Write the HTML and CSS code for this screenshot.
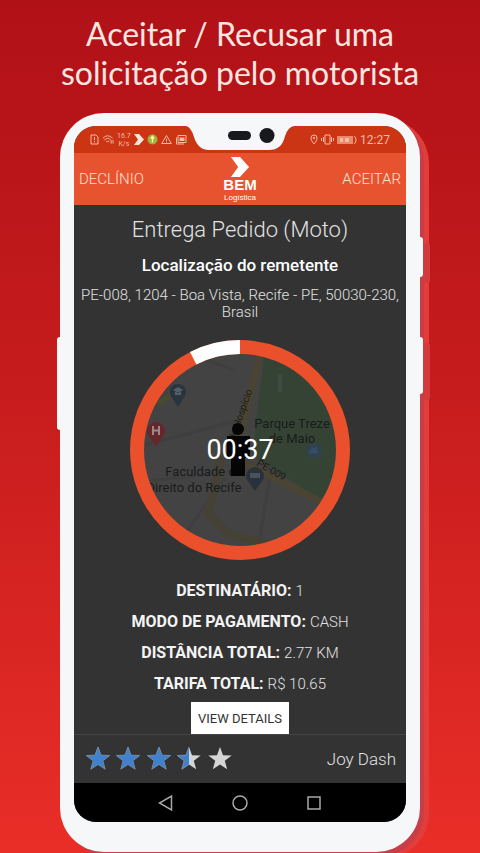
FILE: index.html
```html
<!DOCTYPE html>
<html lang="pt-BR">
<head>
<meta charset="utf-8">
<meta name="viewport" content="width=device-width, initial-scale=1">
<title>BEM Logística</title>
<link rel="stylesheet" href="styles.css">
</head>
<body>
<h1 class="headline">Aceitar / Recusar uma<br>solicitação pelo motorista</h1>
<main class="phone">
  <span class="key key-left"></span>
  <span class="key key-power"></span>
  <span class="key key-volume"></span>
  <div class="screen">
    <div class="status">
      <div class="status-group">
        <svg width="9" height="11" viewBox="0 0 9 11" fill="none" stroke="#f6b9a4"><path d="M1 1h5l2 2v7H1z"/><path d="M4.500 3v3M4.500 7v1.200"/></svg>
        <svg width="12" height="11" viewBox="0 0 13 11" fill="none" stroke="#f6b9a4"><path d="M1 4q5-5 10.500 0M2.500 6q4-3.500 7 0M4.500 8q2-1.500 3.500 0"/><path d="M10 6v4M12 6v4"/></svg>
        <span class="speed">16.7<br>K/s</span>
        <svg width="10" height="11" viewBox="0 0 10 11"><path d="M0 0h5l5 5.500L5 11H0l4-5.500z" fill="#ffe4da"/></svg>
        <svg width="11" height="11" viewBox="0 0 11 11"><circle cx="5.500" cy="5.500" r="5" fill="#9db441"/><path d="M5.500 2.500v6M3.800 4.500l1.700-2 1.700 2" stroke="#fff0a0" fill="none" stroke-width="1.500"/></svg>
        <svg width="11" height="11" viewBox="0 0 11 11" fill="none" stroke="#f6b9a4"><path d="M5.500 1.500l4.800 8H.7zM5.500 4.500v2.300M5.500 7.500v1"/></svg>
        <svg width="12" height="11" viewBox="0 0 12 11" fill="none" stroke="#f6b9a4"><path d="M3 1.500h8v7H3zM1.500 3.500v6.500H9M4.500 4h5M4.500 6h5"/><path d="M5 4.500h4v2H5z" fill="#f6b9a4"/></svg>
      </div>
      <div class="status-group">
        <svg width="8" height="11" viewBox="0 0 8 11" fill="none" stroke="#f6b9a4"><path d="M4 10C2 7.500 1 6 1 4a3 3 0 0 1 6 0c0 2-1 3.500-3 6z"/><circle cx="4" cy="4" r=".8"/></svg>
        <svg width="13" height="11" viewBox="0 0 13 11" fill="none" stroke="#f6b9a4"><path d="M4 1h5v9H4zM2.500 3v5M10.500 3v5M.5 4v3M12.500 4v3"/></svg>
        <svg width="20" height="10" viewBox="0 0 20 10"><path d="M0 1h16v8H0z" fill="#e98a6d"/><path d="M3 3h3v4H3zM8 3h4v4H8z" fill="#f6b9a4"/><path d="M17 1.500q2 0 2 3.500t-2 3.500" fill="none" stroke="#f6b9a4"/></svg>
        <span class="time">12:27</span>
      </div>
    </div>
    <header class="appbar">
      <button class="action" type="button">DECLÍNIO</button>
      <div class="logo">
        <svg width="20" height="20" viewBox="0 0 20 22"><path d="M0 0h10l10 11-10 11H0l8-11z" fill="#fff"/></svg>
        <strong class="logo-name">BEM</strong>
        <span class="logo-sub">Logística</span>
      </div>
      <button class="action action-end" type="button">ACEITAR</button>
    </header>
    <section class="request">
      <h2 class="service">Entrega Pedido (Moto)</h2>
      <h3 class="label">Localização do remetente</h3>
      <p class="address">PE-008, 1204 - Boa Vista, Recife - PE, 50030-230, Brasil</p>
      <div class="timer">
        <svg class="map" viewBox="0 0 220 220">
          <defs><clipPath id="disc"><circle cx="110" cy="110" r="98"/></clipPath></defs>
          <g clip-path="url(#disc)">
            <path d="M0 0h220v220H0z" fill="#434344"/>
            <path d="M20 0L105 30M15 105l90-24M95 138L40 215M140 135l-12 75M10 142l80-9" fill="none" stroke="#3f3f40" stroke-width="3"/>
            <path d="M136 0h84v134l-22 30-76-48z" fill="#344334"/>
            <path d="M150 34v18" fill="none" stroke="#3d4c3e" stroke-width="4"/>
            <path d="M192 164l24-34" fill="none" stroke="#454c52" stroke-width="7"/>
            <path d="M131 10L111 92 104 118 195 164 218 180" fill="none" stroke="#4a4532" stroke-width="7"/>
            <path d="M92 110q-4 30-14 64l20 20 50 12" fill="none" stroke="#454135" stroke-width="8"/>
            <path d="M28 64l12-8" stroke="#494b2d" stroke-width="5"/>
            <g fill="#29343d"><circle cx="48" cy="52" r="8"/><path d="M41 56h14l-7 11z"/></g>
            <path d="M43 50l5-3 5 3-5 3zM45 52v3h6v-3" fill="#52606a"/>
            <g fill="#66272c"><circle cx="26" cy="91" r="9"/><path d="M19 96h14l-7 11z"/></g>
            <path d="M23 86v9M29 86v9M23 90.500h6" stroke="#99898b" stroke-width="2"/>
            <g fill="#29313a"><circle cx="125" cy="136" r="9"/><path d="M118 141h14l-7 10z"/></g>
            <path d="M120 133h10v5h-10z" fill="#4a535d"/>
            <circle cx="184" cy="111" r="8" fill="#30434c"/><path d="M179 112h9M181 109h6" stroke="#354d67" stroke-width="3"/>
            <text class="map-text" x="162" y="88" text-anchor="middle">Parque Treze</text>
            <text class="map-text" x="162" y="103" text-anchor="middle">de Maio</text>
            <text class="map-text" x="74" y="136" text-anchor="middle">Faculdade de</text>
            <text class="map-text" x="64" y="152" text-anchor="middle">Direito do Recife</text>
            <text class="map-road" transform="translate(105 101) rotate(-71)">do Hospício</text>
            <text class="map-road" transform="translate(126 125) rotate(30)">PE-009</text>
            <circle cx="108" cy="89" r="6" fill="#050505"/>
            <path d="M97 96h23v22h-5v18h-14v-18h-4z" fill="#050505"/>
          </g>
          <circle cx="110" cy="110" r="103" fill="none" stroke="#ea502b" stroke-width="14"/>
          <path d="M63.200 18.200A103 103 0 0 1 110 7" fill="none" stroke="#fff" stroke-width="14"/>
        </svg>
        <time class="countdown">00:37</time>
      </div>
      <dl class="facts">
        <div class="fact"><dt>DESTINATÁRIO:</dt><dd>1</dd></div>
        <div class="fact"><dt>MODO DE PAGAMENTO:</dt><dd>CASH</dd></div>
        <div class="fact"><dt>DISTÂNCIA TOTAL:</dt><dd>2.77 KM</dd></div>
        <div class="fact"><dt>TARIFA TOTAL:</dt><dd>R$ 10.65</dd></div>
      </dl>
      <button class="details" type="button">VIEW DETAILS</button>
    </section>
    <footer class="customer">
      <svg class="stars" width="150" height="26" viewBox="0 0 150 26" role="img" aria-label="3,5">
        <defs>
          <path id="star" d="M13 1l3 8.200 8.700.3-6.900 5.300 2.400 8.400L13 18.400l-7.200 4.800 2.400-8.400L1.300 9.500l8.700-.3z"/>
          <clipPath id="half"><path d="M0 0h13v26H0z"/></clipPath>
        </defs>
        <g fill="#3f80cf" stroke="#718ba9"><use href="#star" x="1"/><use href="#star" x="31"/><use href="#star" x="62"/></g>
        <use href="#star" x="92" fill="#d5d5d5"/>
        <g transform="translate(92 0)"><use href="#star" fill="#3f80cf" stroke="#718ba9" clip-path="url(#half)"/></g>
        <use href="#star" x="123" fill="#d5d5d5"/>
      </svg>
      <span class="customer-name">Joy Dash</span>
    </footer>
    <nav class="softkeys">
      <button class="softkey" type="button" aria-label="Voltar"><svg width="16" height="18" viewBox="0 0 16 18"><path d="M13.500 2v14L1.500 9z"/></svg></button>
      <button class="softkey" type="button" aria-label="Início"><svg width="16" height="18" viewBox="0 0 16 18"><circle cx="8" cy="9" r="7"/></svg></button>
      <button class="softkey" type="button" aria-label="Recentes"><svg width="16" height="18" viewBox="0 0 16 18"><path d="M2 3h12v12H2z"/></svg></button>
    </nav>
    <svg class="notch" width="108" height="25" viewBox="0 0 108 25">
      <path d="M0 0h108Q102 1 99 10 96 24 83 24H23Q12 24 8 11 5 1 0 0z" fill="#f5f7f8"/>
      <rect x="42" y="5" width="23" height="9" rx="4.500" fill="#17191d"/>
      <circle cx="81" cy="9.500" r="7.500" fill="#17191d"/>
    </svg>
  </div>
</main>
</body>
</html>
```

FILE: styles.css
```css
* { box-sizing: border-box; }

body {
  margin: 0;
  min-height: 100vh;
  background: linear-gradient(#b01117, #c91d1e 50%, #e92e27);
  font-family: Roboto, "Liberation Sans", sans-serif;
  color: #e2e2e2;
}

h2, h3, p, dl, dd { margin: 0; }

button {
  padding: 0;
  border: 0;
  background: none;
  font: inherit;
  color: inherit;
}

.headline {
  margin: 0;
  padding: 14px 0 21px;
  font: 400 32px/39px Lato, sans-serif;
  text-align: center;
  color: #ffe6e0;
}

.phone {
  position: relative;
  width: 75%;
  margin: 0 auto;
  padding: 13px 14px 30px;
  border-radius: 44px;
  background: #f5f7f8;
  box-shadow: 4px 4px 0 #c83e48, 9px 6px 0 #e33c39;
}

.key {
  position: absolute;
  width: 6px;
  border-radius: 3px;
  background: #f5f7f8;
}

.key-left { left: -3px; top: 224px; height: 93px; }
.key-power { right: -3px; top: 124px; height: 40px; box-shadow: 7px 6px 0 #d43a3b; }
.key-volume { right: -3px; top: 224px; height: 57px; box-shadow: 7px 6px 0 #d43a3b; }

.screen {
  position: relative;
  overflow: hidden;
  border-radius: 22px;
  background: #333;
}

.status {
  display: flex;
  justify-content: space-between;
  align-items: center;
  height: 27px;
  padding: 0 16px;
  background: #cb3514;
  color: #f6b9a4;
}

.status-group {
  display: flex;
  align-items: center;
  gap: 3px;
}

.speed {
  font-size: 7px;
  line-height: 8px;
  text-align: center;
}

.time { font-size: 12px; }

.appbar {
  display: grid;
  grid-template-columns: 1fr auto 1fr;
  align-items: center;
  height: 52px;
  padding: 0 5px;
  background: #e8532f;
}

.action {
  font-size: 15px;
  font-weight: 300;
  text-align: left;
  color: #ffe0d4;
}

.action-end { text-align: right; }

.logo {
  display: flex;
  flex-direction: column;
  align-items: center;
  font-family: "Liberation Sans", sans-serif;
  color: #fff;
}

.logo-name {
  font-size: 15px;
  line-height: 16px;
}

.logo-sub {
  font-size: 8px;
  line-height: 9px;
}

.request {
  display: flex;
  flex-direction: column;
  align-items: center;
  padding-top: 11px;
  text-align: center;
}

.service {
  font-size: 22px;
  line-height: 28px;
  font-weight: 300;
}

.label {
  margin-top: 11px;
  font-size: 17px;
  line-height: 20px;
  font-weight: 500;
  color: #fff;
}

.address {
  padding: 0 6px;
  margin-top: 12px;
  font-size: 15px;
  line-height: 17px;
  font-weight: 300;
}

.timer {
  display: grid;
  place-items: center;
  width: 220px;
  margin-top: 19px;
}

.map, .countdown { grid-area: 1 / 1; }

.map {
  display: block;
  width: 100%;
}

.map-text {
  font-size: 13px;
  fill: #191b1c;
}

.map-road {
  font-size: 10px;
  fill: #1d1a12;
}

.countdown {
  font-size: 27px;
  line-height: 32px;
  color: #fff;
}

.facts { margin-top: 15px; }

.fact {
  display: flex;
  justify-content: center;
  align-items: baseline;
  gap: 4px;
}

.fact dt {
  font-size: 16px;
  line-height: 31px;
  font-weight: 700;
  color: #f4f4f4;
}

.fact dd {
  font-size: 15px;
  line-height: 20px;
  font-weight: 300;
}

.details {
  width: 98px;
  height: 32px;
  margin-top: 3px;
  background: #fff;
  font-size: 13px;
  color: #333;
}

.customer {
  display: flex;
  justify-content: space-between;
  align-items: center;
  height: 49px;
  padding: 0 10px;
  border-top: 1px solid #454545;
}

.customer-name {
  font-size: 17px;
  font-weight: 300;
}

.softkeys {
  display: flex;
  justify-content: center;
  align-items: center;
  gap: 58px;
  height: 39px;
  background: #000;
}

.softkey svg {
  display: block;
  fill: none;
  stroke: #a8a8a8;
  stroke-width: 1.5;
}

.notch {
  position: absolute;
  top: 0;
  left: 50%;
  margin-left: -54px;
}
```
